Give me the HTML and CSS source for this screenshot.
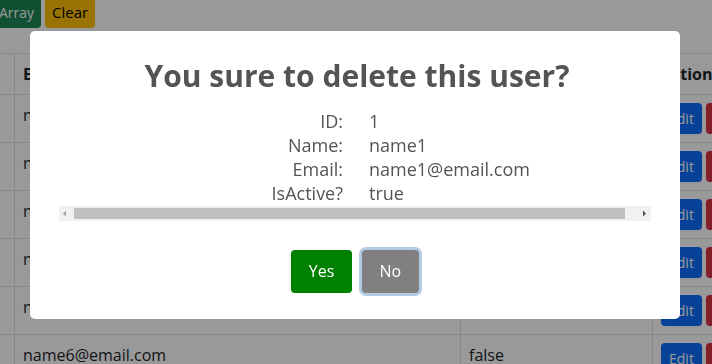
FILE: index.html
```html
<!DOCTYPE html>
<html lang="en">
<head>
<meta charset="utf-8">
<title>Users</title>
<link rel="stylesheet" href="styles.css">
</head>
<body>
<div class="page">
  <div class="toolbar">
    <button class="btn btn-success">Array</button>
    <button class="btn btn-warning">Clear</button>
  </div>
  <table class="users">
    <colgroup>
      <col class="c-name"><col class="c-email"><col class="c-active"><col class="c-actions">
    </colgroup>
    <thead>
      <tr><th>Name</th><th>Email</th><th>IsActive?</th><th>Actions</th></tr>
    </thead>
    <tbody>
      <tr><td>name1</td><td>name1@email.com</td><td>true</td><td><button class="btn btn-primary">Edit</button> <button class="btn btn-danger">Delete</button></td></tr>
      <tr><td>name2</td><td>name2@email.com</td><td>false</td><td><button class="btn btn-primary">Edit</button> <button class="btn btn-danger">Delete</button></td></tr>
      <tr><td>name3</td><td>name3@email.com</td><td>true</td><td><button class="btn btn-primary">Edit</button> <button class="btn btn-danger">Delete</button></td></tr>
      <tr><td>name4</td><td>name4@email.com</td><td>false</td><td><button class="btn btn-primary">Edit</button> <button class="btn btn-danger">Delete</button></td></tr>
      <tr><td>name5</td><td>name5@email.com</td><td>true</td><td><button class="btn btn-primary">Edit</button> <button class="btn btn-danger">Delete</button></td></tr>
      <tr><td>name6</td><td>name6@email.com</td><td>false</td><td><button class="btn btn-primary">Edit</button> <button class="btn btn-danger">Delete</button></td></tr>
    </tbody>
  </table>
</div>

<div class="backdrop">
  <div class="popup" role="dialog" aria-modal="true">
    <h2 class="popup-title">You sure to delete this user?</h2>
    <div class="popup-body">
      <div class="details">
        <span class="k">ID:</span><span class="v">1</span>
        <span class="k">Name:</span><span class="v">name1</span>
        <span class="k">Email:</span><span class="v">name1@email.com</span>
        <span class="k">IsActive?</span><span class="v">true</span>
      </div>
      <div class="hscroll" aria-hidden="true">
        <span class="sb-btn">
          <svg width="15" height="15" viewBox="0 0 15 15"><path d="M4 7.5 L7 4.5 L7 10.5 Z" fill="#a3a3a3"/></svg>
        </span>
        <span class="sb-track"><span class="sb-thumb"></span></span>
        <span class="sb-btn">
          <svg width="15" height="15" viewBox="0 0 15 15"><path d="M10 7.5 L7 4.5 L7 10.5 Z" fill="#505050"/></svg>
        </span>
      </div>
    </div>
    <div class="popup-actions">
      <button class="pbtn pbtn-yes">Yes</button>
      <button class="pbtn pbtn-no">No</button>
    </div>
  </div>
</div>
</body>
</html>
```
FILE: styles.css
```css
html, body {
  margin: 0;
  padding: 0;
  overflow: hidden;
  background: #fff;
}
body {
  font-family: "Open Sans", "Noto Sans", sans-serif;
  font-size: 16px;
  line-height: 24px;
  color: #212529;
  width: 712px;
  height: 364px;
}

.page {
  margin: -3px 0 0 -9px;
}
.toolbar {
  display: flex;
  gap: 5px;
}
.btn {
  font-family: inherit;
  font-size: 14px;
  line-height: 21px;
  padding: 5px 8px;
  border: 0;
  border-radius: 4px;
  color: #fff;
}
.btn-success { background: #198754; padding-right: 7px; }
.btn-warning { background: #ffc107; color: #000; margin-left: -1px; font-size: 15px; padding: 5px 7px; }
.btn-primary { background: #0d6efd; }
.btn-danger { background: #dc3545; }

.users {
  margin: 25px 0 0 -91px;
  border-collapse: collapse;
  table-layout: fixed;
  width: 892px;
}
.c-name { width: 114px; }
.c-email { width: 446px; }
.c-active { width: 192px; }
.c-actions { width: 140px; }
.users th, .users td {
  border: 1px solid #dee2e6;
  padding: 8px;
  text-align: left;
  vertical-align: top;
  white-space: nowrap;
}
.users th { font-weight: 700; }

.backdrop {
  position: fixed;
  inset: 0;
  background: rgba(0, 0, 0, 0.4);
  display: flex;
  align-items: flex-start;
  padding-top: 31px;
}
.popup {
  width: 650px;
  margin-left: 30px;
  background: #fff;
  border-radius: 5px;
  padding-bottom: 26px;
  color: #545454;
}
.popup-title {
  margin: 0;
  padding: 24px 14px 0 18px;
  font-size: 30px;
  line-height: 41px;
  font-weight: 700;
  text-align: center;
}
.popup-body {
  margin: 13px 29px 0;
  overflow: hidden;
  font-size: 18px;
}
.details {
  display: grid;
  grid-template-columns: 284px 1fr;
  column-gap: 26px;
  width: 604px;
  line-height: 24px;
}
.k { text-align: right; }
.v { text-align: left; }

.hscroll {
  display: flex;
  height: 15px;
  margin-top: 1px;
  background: #f1f1f1;
}
.sb-btn {
  width: 15px;
  height: 15px;
  flex: none;
  display: flex;
}
.sb-track {
  flex: 1;
  display: flex;
  padding: 2px 11px 2px 0;
}
.sb-thumb {
  flex: 1;
  background: #c1c1c1;
}

.popup-actions {
  display: flex;
  justify-content: center;
  gap: 10px;
  margin-top: 29px;
}
.pbtn {
  font-family: inherit;
  font-size: 16px;
  line-height: 23px;
  padding: 10px 17.6px;
  border: 0;
  border-radius: 4px;
  color: #fff;
}
.pbtn-yes { background: #008000; }
.pbtn-no {
  background: #808080;
  box-shadow: 0 0 0 3px #b3cbe3;
}
```
